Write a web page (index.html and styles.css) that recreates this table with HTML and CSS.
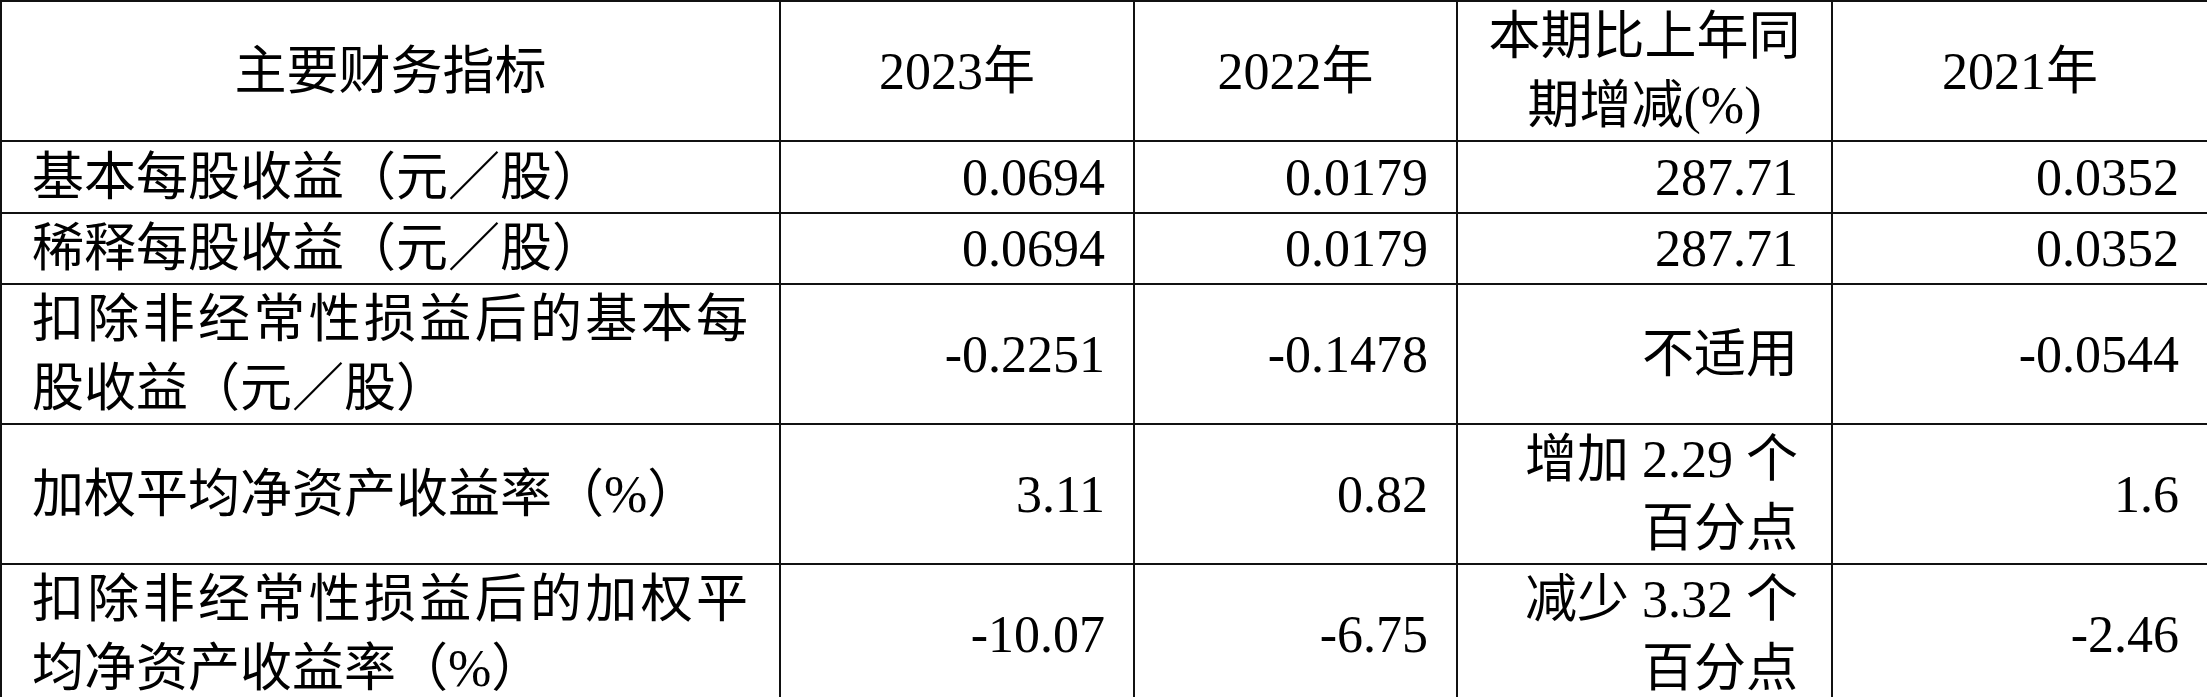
FILE: index.html
```html
<!DOCTYPE html>
<html lang="zh-CN">
<head>
    <meta charset="UTF-8">
    <title>主要财务指标</title>
    <link rel="stylesheet" href="styles.css">
</head>
<body>

<table class="fin-table">
    <colgroup>
        <col class="col-name">
        <col class="col-2023">
        <col class="col-2022">
        <col class="col-change">
        <col class="col-2021">
    </colgroup>
    <tr class="row-head">
        <th>主要财务指标</th>
        <th>2023年</th>
        <th>2022年</th>
        <th>本期比上年同<br>期增减(%)</th>
        <th>2021年</th>
    </tr>
    <tr class="row-single">
        <td class="name">基本每股收益（元／股）</td>
        <td>0.0694</td>
        <td>0.0179</td>
        <td class="change">287.71</td>
        <td>0.0352</td>
    </tr>
    <tr class="row-single row-short">
        <td class="name">稀释每股收益（元／股）</td>
        <td>0.0694</td>
        <td>0.0179</td>
        <td class="change">287.71</td>
        <td>0.0352</td>
    </tr>
    <tr class="row-double">
        <td class="name">
            <span class="line just">扣除非经常性损益后的基本每</span>
            <span class="line">股收益（元／股）</span>
        </td>
        <td>-0.2251</td>
        <td>-0.1478</td>
        <td class="change">不适用</td>
        <td>-0.0544</td>
    </tr>
    <tr class="row-double">
        <td class="name">加权平均净资产收益率（%）</td>
        <td>3.11</td>
        <td>0.82</td>
        <td class="change">增加 2.29 个<br>百分点</td>
        <td>1.6</td>
    </tr>
    <tr class="row-double row-last">
        <td class="name">
            <span class="line just">扣除非经常性损益后的加权平</span>
            <span class="line">均净资产收益率（%）</span>
        </td>
        <td>-10.07</td>
        <td>-6.75</td>
        <td class="change">减少 3.32 个<br>百分点</td>
        <td>-2.46</td>
    </tr>
</table>

</body>
</html>
```

FILE: styles.css
```css
body {
    margin: 0;
    background: #fff;
}
.fin-table {
    border-collapse: collapse;
    table-layout: fixed;
    width: 2207px;
    font-family: "Liberation Serif", "Noto Sans CJK SC", serif;
    font-size: 52px;
    line-height: 69px;
    color: #000;
}
.col-name { width: 779px; }
.col-2023 { width: 354px; }
.col-2022 { width: 323px; }
.col-change { width: 375px; }
.col-2021 { width: 376px; }

.fin-table th,
.fin-table td {
    border: 2px solid #111;
    padding: 0 28px 0 10px;
    vertical-align: middle;
    white-space: nowrap;
}
.fin-table th {
    font-weight: normal;
    text-align: center;
    padding: 0;
}
.fin-table td {
    text-align: right;
}
.fin-table td.name {
    text-align: left;
    padding: 0 31px 0 30px;
}
.fin-table td.change {
    padding-right: 33px;
}

.row-head { height: 138px; }
.row-single { height: 72px; }
.row-short { height: 69px; }
.row-double { height: 139px; }
.row-last { height: 137px; }

.line {
    display: block;
}
.just {
    text-align: justify;
    text-align-last: justify;
}
```
